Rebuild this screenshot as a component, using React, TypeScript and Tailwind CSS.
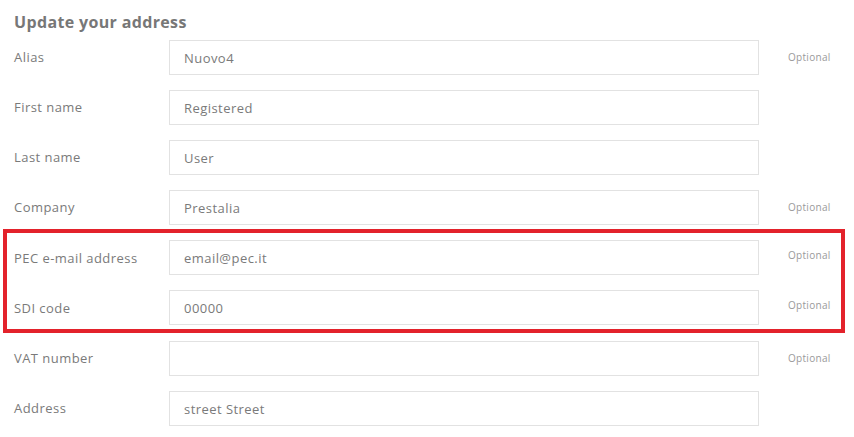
import React from 'react';

type Field = { label: string; value: string; optional?: boolean; shift?: boolean };

const fields: Field[] = [
  { label: 'Alias', value: 'Nuovo4', optional: true },
  { label: 'First name', value: 'Registered' },
  { label: 'Last name', value: 'User' },
  { label: 'Company', value: 'Prestalia', optional: true },
  { label: 'PEC e-mail address', value: 'email@pec.it', optional: true, shift: true },
  { label: 'SDI code', value: '00000', optional: true, shift: true },
  { label: 'VAT number', value: '', optional: true },
  { label: 'Address', value: 'street Street' },
];

const App: React.FC = () => {
  return (
    <div className="relative w-[854px] h-[437px] overflow-hidden bg-white pl-[14px] font-['Open_Sans','Liberation_Sans',sans-serif] text-[#7a7a7a]">
      <h1 className="pt-[11px] h-[40px] text-[16px] font-bold leading-[22px] tracking-[0.35px] text-[#777]">Update your address</h1>

      <div className="flex flex-col gap-[15px]">
        {fields.map((f) => (
          <div key={f.label} className={`flex items-center h-[35px] ${f.label === 'VAT number' ? 'mt-[1px]' : ''}`}>
            <label className={`w-[155px] text-[13px] tracking-[0.45px] ${f.shift ? 'pt-[3px]' : ''}`}>{f.label}</label>
            <input
              readOnly
              value={f.value}
              className="w-[590px] h-[35px] border border-[#e2e2e2] bg-white px-[14px] text-[13px] tracking-[0.45px] text-[#7a7a7a] outline-none"
            />
            {f.optional && (
              <span className={`ml-[29px] text-[10px] tracking-[0.3px] text-[#9a9a9a] ${f.shift ? 'pb-[4px]' : ''}`}>Optional</span>
            )}
          </div>
        ))}
      </div>

      {/* highlight box */}
      <div className="absolute left-[3px] top-[229px] w-[842px] h-[104px] border-4 border-[#e3222b] pointer-events-none" />
    </div>
  );
};

export default App;
